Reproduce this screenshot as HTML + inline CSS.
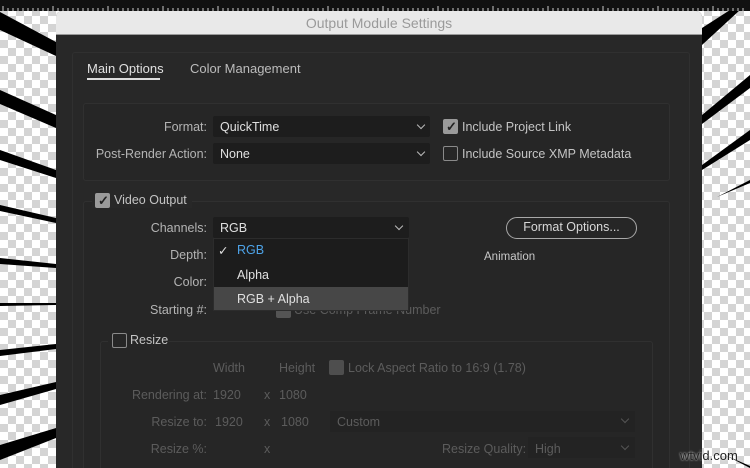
<!DOCTYPE html>
<html style="width:750px;height:468px;overflow:hidden"><head><meta charset="utf-8"><style>
*{margin:0;padding:0;box-sizing:border-box}
body{width:750px;height:468px;overflow:hidden;position:relative;background:#fff;font-family:"Liberation Sans",sans-serif;font-size:12.5px}
.chk{position:absolute;background-color:#fff;background-image:linear-gradient(45deg,#d4d4d4 25%,transparent 25%,transparent 75%,#d4d4d4 75%),linear-gradient(45deg,#d4d4d4 25%,transparent 25%,transparent 75%,#d4d4d4 75%);background-size:16px 16px;background-position:0 0,8px 8px}
.a{position:absolute}
.lbl{position:absolute;color:#b4b4b4;text-align:right;white-space:nowrap}
.v{position:absolute;color:#e0e0e0;white-space:nowrap}
.dis{color:#5c5c5c}
.dd{position:absolute;background:#1d1d1d;border-radius:2px}
.cb{position:absolute;width:15px;height:15px;border:1.5px solid #8a8a8a;border-radius:2px}
.cb.on{background:#9a9a9a;border-color:#9a9a9a}
.car{position:absolute;width:6px;height:6px;border-right:1.3px solid #bbb;border-bottom:1.3px solid #bbb;transform:rotate(45deg)}
#wrap{position:absolute;left:0;top:0;width:750px;height:468px;overflow:hidden}
</style></head><body><div id="wrap">
<div class="chk" style="left:0;top:0;width:750px;height:468px"></div>
<svg class="a" style="left:0;top:0" width="750" height="468">
<polygon points="0,12 56,42 56,56 0,30" fill="#000"/>
<polygon points="0,90 56,115 56,128 0,104" fill="#000"/>
<polygon points="0,150 56,170 56,178 0,160" fill="#000"/>
<polygon points="0,205 56,218 56,223 0,211" fill="#000"/>
<polygon points="0,258 56,264 56,268 0,264" fill="#000"/>
<polygon points="0,303 56,303 56,305 0,306" fill="#000"/>
<polygon points="0,350 56,344 56,349 0,356" fill="#000"/>
<polygon points="0,395 56,382 56,389 0,405" fill="#000"/>
<polygon points="0,445 56,428 56,438 0,460" fill="#000"/>
<polygon points="702,28 730,10 740,10 702,45" fill="#000"/>
<polygon points="702,115 750,75 750,88 702,124" fill="#000"/>
<polygon points="702,165 750,130 750,140 702,170" fill="#000"/>
<polygon points="717,197 750,180 750,183" fill="#000"/>
<polygon points="725,455 750,466 750,468" fill="#000"/>
</svg>
<div class="a" style="left:0;top:0;width:750px;height:11px;background:#111"></div>
<svg class="a" style="left:0;top:0" width="750" height="11">
<g stroke="#ccc" stroke-width="1">
<path d="M3 6v5M8 8v3M13 8v3M18 8v3M23 8v3M28 8v3M33 8v3M38 8v3M43 8v3M48 8v3M53 6v5M58 8v3M63 8v3M68 8v3M73 8v3M78 8v3M83 8v3M88 8v3M93 8v3M98 8v3M103 8v3M108 6v5M113 8v3M118 8v3M123 8v3M128 8v3M133 8v3M138 8v3M143 8v3M148 8v3M153 8v3M158 8v3M163 6v5M168 8v3M173 8v3M178 8v3M183 8v3M188 8v3M193 8v3M198 8v3M203 8v3M208 8v3M213 8v3M218 6v5M223 8v3M228 8v3M233 8v3M238 8v3M243 8v3M248 8v3M253 8v3M258 8v3M263 8v3M268 8v3M273 6v5M278 8v3M283 8v3M288 8v3M293 8v3M298 8v3M303 8v3M308 8v3M313 8v3M318 8v3M323 8v3M328 6v5M333 8v3M338 8v3M343 8v3M348 8v3M353 8v3M358 8v3M363 8v3M368 8v3M373 8v3M378 8v3M383 6v5M388 8v3M393 8v3M398 8v3M403 8v3M408 8v3M413 8v3M418 8v3M423 8v3M428 8v3M433 8v3M438 6v5M443 8v3M448 8v3M453 8v3M458 8v3M463 8v3M468 8v3M473 8v3M478 8v3M483 8v3M488 8v3M493 6v5M498 8v3M503 8v3M508 8v3M513 8v3M518 8v3M523 8v3M528 8v3M533 8v3M538 8v3M543 8v3M548 6v5M553 8v3M558 8v3M563 8v3M568 8v3M573 8v3M578 8v3M583 8v3M588 8v3M593 8v3M598 8v3M603 6v5M608 8v3M613 8v3M618 8v3M623 8v3M628 8v3M633 8v3M638 8v3M643 8v3M648 8v3M653 8v3M658 6v5M663 8v3M668 8v3M673 8v3M678 8v3M683 8v3M688 8v3M693 8v3M698 8v3M703 8v3M708 8v3M713 6v5M718 8v3M723 8v3M728 8v3M733 8v3M738 8v3M743 8v3"/>
</g></svg>
<div class="a" style="left:56px;top:11px;width:646px;height:457px;background:#282828;border-radius:6px 6px 0 0;overflow:hidden">
 <div class="a" style="left:0;top:0;width:646px;height:24px;background:#e9e9e9;border-bottom:1px solid #999;text-align:center;color:#9a9a9a;font-size:14px;line-height:24px">Output Module Settings</div>
</div>
<div class="a" style="left:72px;top:52px;width:618px;height:420px;border:1px solid #303030;border-radius:3px"></div>
<div class="v" style="left:87px;top:61px;font-size:13px">Main Options</div>
<div class="a" style="left:87px;top:78px;width:73px;height:2px;background:#ddd"></div>
<div class="v" style="left:190px;top:61px;font-size:13px;color:#bcbcbc">Color Management</div>
<div class="a" style="left:83px;top:103px;width:587px;height:78px;border:1px solid #303030;border-radius:3px;background:#262626"></div>
<div class="lbl" style="right:543px;top:120px">Format:</div>
<div class="dd" style="left:213px;top:116px;width:217px;height:21px"></div>
<div class="v" style="left:220px;top:120px">QuickTime</div>
<div class="car" style="left:418px;top:122px"></div>
<div class="lbl" style="right:543px;top:147px">Post-Render Action:</div>
<div class="dd" style="left:213px;top:143px;width:217px;height:21px"></div>
<div class="v" style="left:220px;top:147px">None</div>
<div class="car" style="left:418px;top:149px"></div>
<div class="cb on" style="left:443px;top:119px"></div>
<div class="a" style="left:446px;top:119px;color:#222;font-size:13px;font-weight:bold">✓</div>
<div class="v" style="left:462px;top:120px;color:#c4c4c4">Include Project Link</div>
<div class="cb" style="left:443px;top:146px"></div>
<div class="v" style="left:462px;top:147px;color:#c4c4c4">Include Source XMP Metadata</div>
<div class="a" style="left:83px;top:201px;width:587px;height:280px;border:1px solid #303030;border-radius:3px;background:#262626"></div>
<div class="a" style="left:92px;top:192px;width:100px;height:16px;background:#282828"></div>
<div class="cb on" style="left:95px;top:193px"></div>
<div class="a" style="left:98px;top:193px;color:#222;font-size:13px;font-weight:bold">✓</div>
<div class="v" style="left:114px;top:193px;color:#c4c4c4">Video Output</div>
<div class="lbl" style="right:543px;top:221px">Channels:</div>
<div class="dd" style="left:213px;top:217px;width:196px;height:21px"></div>
<div class="v" style="left:220px;top:221px">RGB</div>
<div class="car" style="left:396px;top:223px"></div>
<div class="a" style="left:506px;top:217px;width:131px;height:22px;border:1.5px solid #a8a8a8;border-radius:11px;color:#d8d8d8;text-align:center;line-height:19px">Format Options...</div>
<div class="lbl" style="right:543px;top:248px">Depth:</div>
<div class="lbl" style="right:543px;top:275px">Color:</div>
<div class="lbl" style="right:543px;top:303px">Starting #:</div>
<div class="v" style="left:484px;top:251px;font-size:11.5px;color:#c8c8c8">Animation</div>
<div class="cb on" style="left:276px;top:303px;opacity:.4"></div>
<div class="v dis" style="left:294px;top:303px">Use Comp Frame Number</div>
<div class="a" style="left:213px;top:238px;width:196px;height:73px;background:#1c1c1c;border:1px solid #2c2c2c"></div>
<div class="a" style="left:214px;top:287px;width:194px;height:23px;background:#474747"></div>
<div class="v" style="left:218px;top:243px;color:#ddd">✓</div>
<div class="v" style="left:237px;top:243px;color:#4da3e8">RGB</div>
<div class="v" style="left:237px;top:268px">Alpha</div>
<div class="v" style="left:237px;top:292px">RGB + Alpha</div>
<div class="a" style="left:100px;top:341px;width:553px;height:140px;border:1px solid #303030;border-radius:3px"></div>
<div class="a" style="left:108px;top:332px;width:60px;height:16px;background:#262626"></div>
<div class="cb" style="left:112px;top:333px"></div>
<div class="v" style="left:130px;top:333px;color:#c4c4c4">Resize</div>
<div class="v dis" style="left:213px;top:361px">Width</div>
<div class="v dis" style="left:279px;top:361px">Height</div>
<div class="cb on" style="left:329px;top:360px;opacity:.35"></div>
<div class="v dis" style="left:348px;top:361px">Lock Aspect Ratio to 16:9 (1.78)</div>
<div class="lbl dis" style="right:543px;top:388px">Rendering at:</div>
<div class="v dis" style="left:213px;top:388px">1920</div>
<div class="v dis" style="left:264px;top:388px">x</div>
<div class="v dis" style="left:279px;top:388px">1080</div>
<div class="lbl dis" style="right:543px;top:415px">Resize to:</div>
<div class="v dis" style="left:215px;top:415px">1920</div>
<div class="v dis" style="left:264px;top:415px">x</div>
<div class="v dis" style="left:281px;top:415px">1080</div>
<div class="a" style="left:330px;top:411px;width:305px;height:21px;background:#232323"></div>
<div class="v dis" style="left:337px;top:415px">Custom</div>
<div class="car" style="left:622px;top:416px;border-color:#555"></div>
<div class="lbl dis" style="right:543px;top:442px">Resize %:</div>
<div class="v dis" style="left:264px;top:442px">x</div>
<div class="v dis" style="left:442px;top:442px">Resize Quality:</div>
<div class="a" style="left:528px;top:437px;width:107px;height:21px;background:#232323"></div>
<div class="v dis" style="left:535px;top:442px">High</div>
<div class="car" style="left:622px;top:443px;border-color:#555"></div>
<div class="a" style="left:680px;top:448px;color:#222;font-size:13px;text-shadow:0 0 2px #fff">wtvid.com</div>
</div></body></html>
